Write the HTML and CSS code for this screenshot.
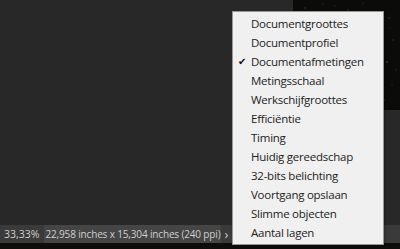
FILE: index.html
```html
<!DOCTYPE html>
<html lang="nl">
<head>
  <meta charset="UTF-8">
  <title>Statusbalk</title>
  <link rel="stylesheet" href="styles.css">
</head>
<body>
  <div class="app flex column">
    <div class="canvas flex justif-end">
      <div class="doc">
        <svg class="specks" width="107" height="110" viewBox="0 0 107 110">
          <g fill="#3a3a30">
            <circle cx="12" cy="8" r="0.8"/><circle cx="30" cy="4" r="0.6"/>
            <circle cx="55" cy="10" r="0.7"/><circle cx="70" cy="3" r="0.6"/>
            <circle cx="96" cy="18" r="0.8"/><circle cx="100" cy="40" r="0.7"/>
            <circle cx="94" cy="62" r="0.9"/><circle cx="99" cy="85" r="0.6"/>
            <circle cx="42" cy="6" r="0.5"/><circle cx="91" cy="100" r="0.7"/>
            <circle cx="103" cy="70" r="0.6"/><circle cx="97" cy="28" r="0.5"/>
          </g>
        </svg>
      </div>
    </div>
    <div class="statusbar flex align-center">
      <span class="zoom">33,33%</span>
      <span class="info">22,958 inches x 15,304 inches (240 ppi)</span>
      <span class="more">&#x203A;</span>
    </div>
    <div class="bottombar"></div>
  </div>

  <ul class="menu">
    <li>Documentgroottes</li>
    <li>Documentprofiel</li>
    <li class="checked">Documentafmetingen</li>
    <li>Metingsschaal</li>
    <li>Werkschijfgroottes</li>
    <li>Efficiëntie</li>
    <li>Timing</li>
    <li>Huidig gereedschap</li>
    <li>32-bits belichting</li>
    <li>Voortgang opslaan</li>
    <li>Slimme objecten</li>
    <li>Aantal lagen</li>
  </ul>
</body>
</html>
```

FILE: styles.css
```css
/** Commun */
* { padding: 0;
    margin: 0;
    box-sizing: border-box;
    font-family: "Open Sans", "Noto Sans", sans-serif;
}

.flex { display: flex;}
.column { flex-direction: column;}
.justif-end { justify-content: flex-end;}
.align-center { align-items: center;}

body {
   width: 400px;
   height: 249px;
   overflow: hidden;
   background-color: #282828;
}
.app {
   height: 249px;
}
.canvas {
   flex: 1;
   align-items: flex-start;
}
.doc {
   width: 107px;
   height: 110px;
   background-color: #0b0b0a;
}
.specks {
   display: block;
}
.statusbar {
   height: 18px;
   background-color: #3a3a3a;
   color: #cfcfcf;
   font-size: 10px;
   white-space: nowrap;
}
.zoom {
   padding: 0 5px 0 4px;
   font-size: 10.5px;
}
.info {
   background-color: #454545;
   height: 18px;
   line-height: 18px;
   padding: 0 1px;
   letter-spacing: -0.15px;
}
.more {
   padding: 0 5px 0 3px;
   font-size: 13px;
   line-height: 18px;
}
.bottombar {
   height: 6px;
   background-color: #0f0d0a;
}

/** Menu contextuel */
.menu {
   position: absolute;
   left: 232px;
   top: 11px;
   width: 152px;
   list-style: none;
   background-color: #f0f0f0;
   border: 1px solid #979797;
   padding: 2px 0;
   box-shadow: 1px 1px 2px rgba(0,0,0,0.3);
}
.menu li {
   height: 19px;
   line-height: 19px;
   padding-left: 18px;
   font-size: 11.5px;
   letter-spacing: -0.25px;
   color: #222;
   position: relative;
}
.menu li.checked::before {
   content: "\2714";
   position: absolute;
   left: 5px;
   font-size: 10px;
   color: #111;
}
```
